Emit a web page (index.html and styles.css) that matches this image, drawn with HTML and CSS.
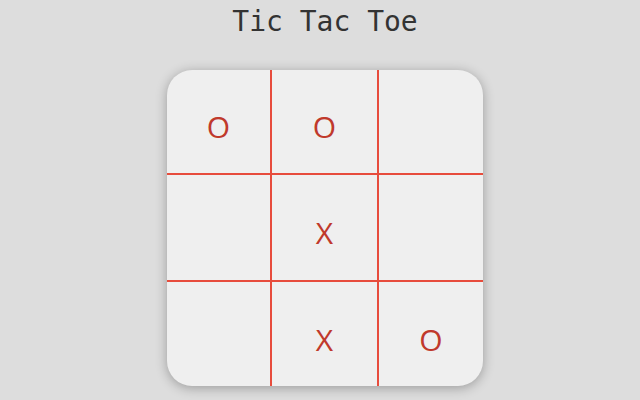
FILE: index.html
```html
<!DOCTYPE html>
<html>
<head>
<meta charset="utf-8">
<link rel="stylesheet" href="styles.css">
</head>
<body>
<h1 class="title">Tic Tac Toe</h1>
<div class="board">
  <div class="cell">O</div>
  <div class="cell">O</div>
  <div class="cell"></div>
  <div class="cell"></div>
  <div class="cell">X</div>
  <div class="cell"></div>
  <div class="cell"></div>
  <div class="cell">X</div>
  <div class="cell">O</div>
</div>
</body>
</html>
```
FILE: styles.css
```css
html, body {
  margin: 0;
  padding: 0;
  background: #dddddd;
  height: 100%;
  overflow: hidden;
}
body {
  display: flex;
  flex-direction: column;
  align-items: center;
  padding-left: 10px;
  box-sizing: border-box;
}
.title {
  margin: 0;
  padding-top: 4px;
  font-family: "DejaVu Sans Mono", monospace;
  font-weight: normal;
  font-size: 28px;
  line-height: 36px;
  color: #333333;
}
.board {
  margin-top: 30px;
  width: 316px;
  height: 316px;
  display: grid;
  grid-template-columns: 105px 107px 104px;
  grid-template-rows: 105px 107px 104px;
  background: #efefef;
  border-radius: 25px;
  box-shadow: 0 2px 12px rgba(0, 0, 0, 0.3);
}
.cell {
  display: flex;
  align-items: center;
  justify-content: center;
  padding-top: 10px;
  box-sizing: border-box;
  font-family: "Open Sans", sans-serif;
  font-size: 30px;
  color: #c0392b;
}
.cell:nth-child(3n+1),
.cell:nth-child(3n+2) {
  border-right: 2px solid #e74c3c;
}
.cell:nth-child(-n+6) {
  border-bottom: 2px solid #e74c3c;
}
```
